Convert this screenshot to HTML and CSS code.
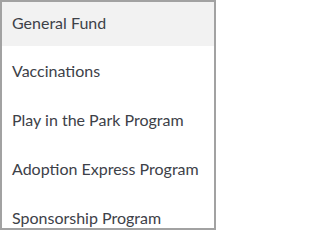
FILE: index.html
```html
<!DOCTYPE html>
<html lang="en">
<head>
<meta charset="utf-8">
<title>Funds</title>
<link rel="stylesheet" href="styles.css">
</head>
<body>
<ul class="list">
  <li class="item active">General Fund</li>
  <li class="item">Vaccinations</li>
  <li class="item">Play in the Park Program</li>
  <li class="item">Adoption Express Program</li>
  <li class="item">Sponsorship Program</li>
</ul>
</body>
</html>
```
FILE: styles.css
```css
html, body {
  margin: 0;
  padding: 0;
  background: #ffffff;
}
.list {
  list-style: none;
  margin: 0;
  padding: 0;
  box-sizing: border-box;
  width: 216px;
  height: 230px;
  border: 2px solid #a2a2a2;
  overflow: hidden;
  background: #ffffff;
  font-family: Lato, "Open Sans", sans-serif;
  font-size: 16px;
  color: #3d4148;
}
.item {
  padding: 15px 10px;
  line-height: 19px;
  white-space: nowrap;
}
.item:first-child {
  padding-top: 11px;
  padding-bottom: 14px;
}
.item.active {
  background: #f2f2f2;
}
```
